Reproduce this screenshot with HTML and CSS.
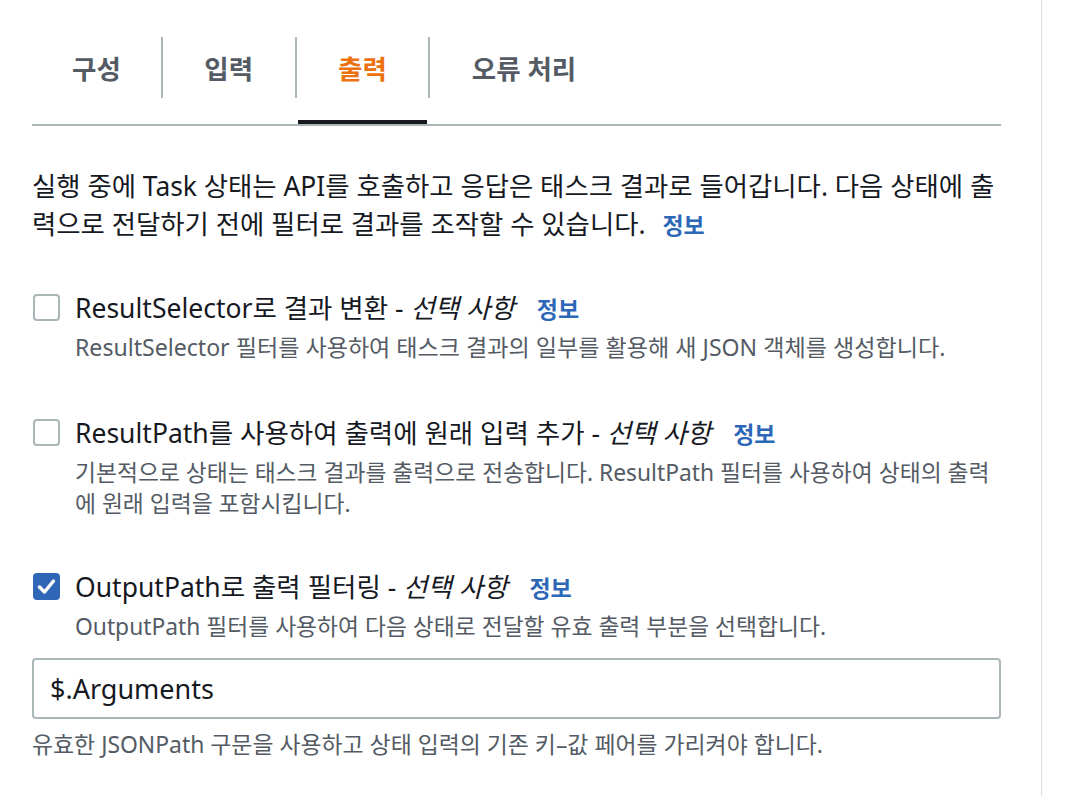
FILE: index.html
```html
<!DOCTYPE html>
<html lang="ko">
<head>
<meta charset="utf-8">
<title>출력</title>
<link rel="stylesheet" href="styles.css">
</head>
<body>
<div class="page">
  <div class="panel">
    <div class="tabs">
      <div class="tab tab-first"><span class="tab-label">구성</span></div>
      <span class="sep"></span>
      <div class="tab"><span class="tab-label">입력</span></div>
      <span class="sep"></span>
      <div class="tab tab-active"><span class="tab-label">출력</span></div>
      <span class="sep"></span>
      <div class="tab"><span class="tab-label">오류 처리</span></div>
    </div>

    <p class="intro"><span class="line">실행 중에 Task 상태는 API를 호출하고 응답은 태스크 결과로 들어갑니다. 다음 상태에 출</span><span class="line">력으로 전달하기 전에 필터로 결과를 조작할 수 있습니다. <a class="info intro-info">정보</a></span></p>

    <div class="option opt-1">
      <span class="box"></span>
      <div class="opt-text">
        <div class="opt-label">ResultSelector로 결과 변환 - <i>선택 사항</i> <a class="info">정보</a></div>
        <div class="opt-desc desc-wide">ResultSelector 필터를 사용하여 태스크 결과의 일부를 활용해 새 JSON 객체를 생성합니다.</div>
      </div>
    </div>

    <div class="option opt-2">
      <span class="box"></span>
      <div class="opt-text">
        <div class="opt-label">ResultPath를 사용하여 출력에 원래 입력 추가 - <i>선택 사항</i> <a class="info">정보</a></div>
        <div class="opt-desc"><span class="line">기본적으로 상태는 태스크 결과를 출력으로 전송합니다. ResultPath 필터를 사용하여 상태의 출력</span><span class="line">에 원래 입력을 포함시킵니다.</span></div>
      </div>
    </div>

    <div class="option opt-3">
      <span class="box box-checked">
        <svg viewBox="0 0 27 27" width="27" height="27"><polyline points="6.5,14 11.5,19 20.5,8" fill="none" stroke="#ffffff" stroke-width="3.4" stroke-linecap="round" stroke-linejoin="round"/></svg>
      </span>
      <div class="opt-text">
        <div class="opt-label">OutputPath로 출력 필터링 - <i>선택 사항</i> <a class="info">정보</a></div>
        <div class="opt-desc">OutputPath 필터를 사용하여 다음 상태로 전달할 유효 출력 부분을 선택합니다.</div>
      </div>
    </div>

    <div class="field">$.Arguments</div>
    <div class="hint">유효한 JSONPath 구문을 사용하고 상태 입력의 기존 키–값 페어를 가리켜야 합니다.</div>
  </div>
</div>
</body>
</html>
```

FILE: styles.css
```css
* { box-sizing: border-box; }

html, body {
  margin: 0;
  padding: 0;
  background: #ffffff;
}

body {
  font-family: "Noto Sans", "Noto Sans CJK KR", sans-serif;
  color: #16191f;
}

.page {
  width: 1042px;
  min-height: 796px;
  border-right: 1px solid #dcdfe0;
  padding-left: 32px;
}

.panel {
  width: 969px;
  padding-top: 37px;
}

.line {
  display: block;
  white-space: nowrap;
}

.tabs {
  display: flex;
  border-bottom: 2px solid #aab7b8;
}

.tab {
  display: flex;
  flex-direction: column;
  padding-bottom: 22px;
  border-bottom: 4px solid transparent;
}

.tab-active {
  border-bottom-color: #16191f;
  margin-left: 1px;
  margin-right: 1px;
}

.tab-label {
  height: 61px;
  display: flex;
  align-items: center;
  padding: 0 41.5px;
  font-size: 26.5px;
  font-weight: 700;
  color: #545b64;
}

.tab-first .tab-label {
  padding: 0 40px;
}

.tab-active .tab-label {
  color: #ec7211;
  padding: 0 40.5px;
}

.sep {
  width: 2px;
  height: 61px;
  background: #aab7b8;
  flex: none;
}

.intro {
  margin: 41px 0 0;
  font-size: 26.4px;
  line-height: 38px;
}

.info {
  color: #2d67b8;
  font-weight: 700;
  font-size: 23px;
  text-decoration: none;
}

.intro-info {
  margin-left: 10px;
}

.option {
  display: grid;
  grid-template-columns: 27px 1fr;
  column-gap: 16px;
}

.opt-1 { margin-top: 49px; }
.opt-2 { margin-top: 55px; }
.opt-3 { margin-top: 53px; }

.box {
  width: 27px;
  height: 27px;
  margin-top: 1px;
  margin-left: 1px;
  border: 2px solid #aab7b8;
  border-radius: 4px;
  display: block;
}

.box-checked {
  border: none;
  background: #2f67b6;
}

.box-checked svg {
  display: block;
}

.opt-label {
  font-size: 26.5px;
  line-height: 30px;
  white-space: nowrap;
}

.opt-label i {
  font-style: italic;
}

.opt-label .info {
  margin-left: 15px;
}

.opt-desc {
  margin-top: 8px;
  font-size: 22.8px;
  line-height: 31px;
  color: #545b64;
}

.desc-wide {
  font-size: 23.1px;
}

.field {
  margin-top: 16px;
  height: 61px;
  border: 2px solid #aab7b8;
  border-radius: 4px;
  padding-left: 16px;
  display: flex;
  align-items: center;
  font-size: 27px;
  color: #16191f;
}

.hint {
  margin-top: 11px;
  font-size: 22.9px;
  line-height: 30px;
  color: #545b64;
}
```
